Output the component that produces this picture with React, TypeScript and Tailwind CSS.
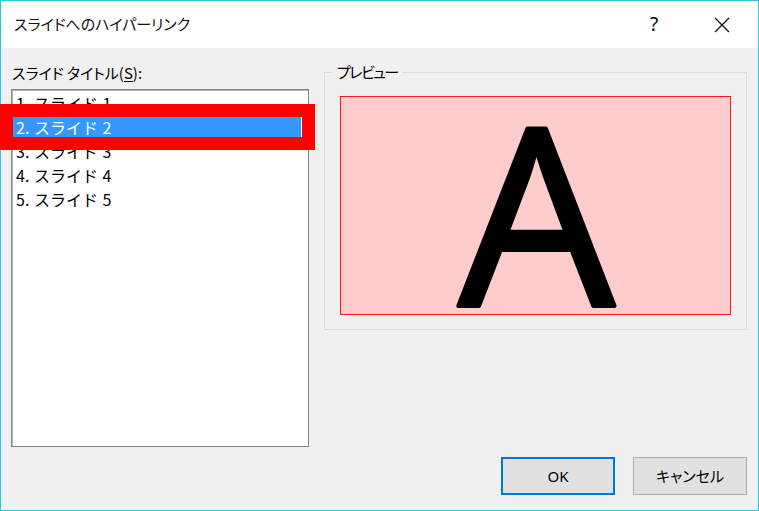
import React from 'react';

const slides = ['1. スライド 1', '2. スライド 2', '3. スライド 3', '4. スライド 4', '5. スライド 5'];

export default function App() {
  const jp = "font-['Noto_Sans_CJK_JP',sans-serif]";

  return (
    <div className={`relative w-[759px] h-[511px] border border-[#2ac6dd] flex flex-col text-black ${jp}`}>
      {/* Title bar */}
      <div className="h-[47px] bg-white flex items-center shrink-0">
        <span className="pl-[13px] text-[15px] [font-feature-settings:'palt'] text-[#111]">スライドへのハイパーリンク</span>
        <span className="ml-auto w-[20px] text-center text-[19px] font-['Noto_Sans',sans-serif] leading-none">?</span>
        <div className="ml-[50px] mr-[28px] w-[16px] h-[16px]">
          <svg viewBox="0 0 16 16" className="w-[16px] h-[16px]" fill="none" stroke="#111" strokeWidth="1.3">
            <path d="M1 1 L15 15 M15 1 L1 15" />
          </svg>
        </div>
      </div>

      {/* Body */}
      <div className="flex-1 bg-[#f0f0f0] flex flex-col pt-[14px] pl-[10px] pr-[11px] pb-[15px]">
        <div className="flex gap-[15px]">
          {/* Slide list */}
          <div className="w-[298px] flex flex-col">
            <div className="h-[22px] leading-[22px] text-[15px] [font-feature-settings:'palt'] pl-[1px]">
              スライド タイトル(<span className="underline underline-offset-2">S</span>):
            </div>
            <div className="mt-[5px] h-[358px] bg-white border border-[#82858a] shadow-[inset_1px_1px_0_#b5b7ba] pt-[1px] pl-[1px]">
              {slides.map((s, i) => (
                <div
                  key={s}
                  className={`h-[24px] flex items-center ${i === 1 ? 'text-white' : ''}`}
                >
                  <div className={`w-[288px] h-[21px] flex items-center pl-[3px] text-[16px] leading-none [word-spacing:1px] ${i === 1 ? 'bg-[#3399ff]' : ''}`}>
                    {s}
                  </div>
                </div>
              ))}
            </div>
          </div>

          {/* Preview */}
          <fieldset className="w-[423px] h-[268px] border border-[#dcdcdc] px-[15px] pb-[13px]">
            <legend className="ml-[-7px] px-[4px] h-[20px] leading-[20px] text-[15px] tracking-[-1.5px] [font-feature-settings:'palt']">プレビュー</legend>
            <div className="mt-[14px] h-[219px] bg-[#ffcccc] border-[1.5px] border-[#ff1a1a]">
              <svg viewBox="0 0 388 216" className="w-full h-full overflow-visible">
                <text
                  x="195"
                  y="208"
                  textAnchor="middle"
                  fontFamily="'Open Sans', sans-serif"
                  fontWeight="400"
                  fontSize="247"
                  fill="#000"
                  stroke="#000"
                  strokeWidth="4"
                  strokeLinejoin="round"
                >
                  A
                </text>
              </svg>
            </div>
          </fieldset>
        </div>

        {/* Buttons */}
        <div className="mt-auto flex justify-end gap-[18px]">
          <button className="w-[114px] h-[38px] bg-[#e1e1e1] border-2 border-[#0078d7] text-[15px] font-['Noto_Sans',sans-serif]">
            OK
          </button>
          <button className="w-[114px] h-[38px] bg-[#e1e1e1] border border-[#adadad] text-[15px] [font-feature-settings:'palt']">
            キャンセル
          </button>
        </div>
      </div>

      {/* Red annotation frame */}
      <div className="absolute left-[-1px] top-[103px] w-[315px] h-[46px] border-[13px] border-[#ff0000] pointer-events-none" />
    </div>
  );
}
